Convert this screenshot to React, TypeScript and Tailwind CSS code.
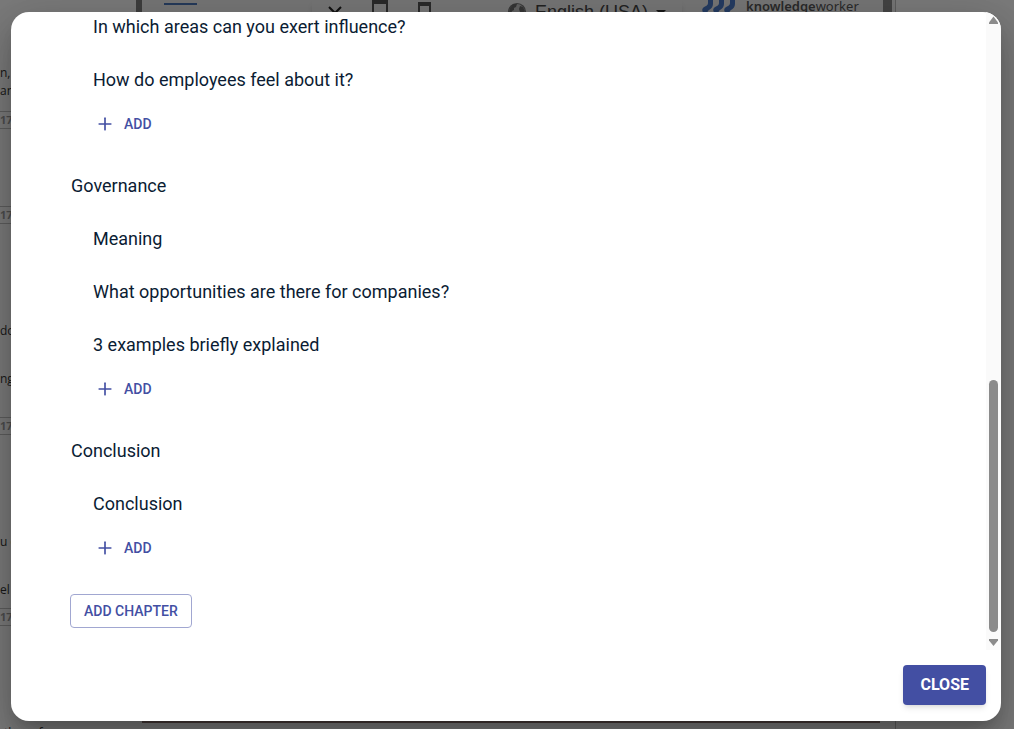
import React from 'react';
import { Plus } from 'lucide-react';

interface Chapter {
  title: string;
  topics: string[];
}

interface SideLine {
  text: string;
  spacing: string;
  badge?: boolean;
}

const chapters: Chapter[] = [
  { title: 'Governance', topics: ['Meaning', 'What opportunities are there for companies?', '3 examples briefly explained'] },
  { title: 'Conclusion', topics: ['Conclusion'] },
];

const sideLines: SideLine[] = [
  { text: 'n,', spacing: 'mt-[65px]' },
  { text: 'an', spacing: 'mt-[2px]' },
  { text: '17', spacing: 'mt-3', badge: true },
  { text: '17', spacing: 'mt-[77px]', badge: true },
  { text: 'do', spacing: 'mt-[99px]' },
  { text: 'ng', spacing: 'mt-8' },
  { text: '17', spacing: 'mt-[30px]', badge: true },
  { text: 'u e', spacing: 'mt-[99px]' },
  { text: 'el', spacing: 'mt-8' },
  { text: '17', spacing: 'mt-[10px]', badge: true },
  { text: 'those f', spacing: 'mt-[99px] pl-1' },
];

const Globe = () => (
  <svg width="20" height="20" viewBox="0 0 20 20" className="shrink-0">
    <circle cx="10" cy="10" r="8.5" fill="#c4c4c4" stroke="#777" strokeWidth="1.2" />
    <path d="M3 6l3-4 4 0-1 3-2 1 0 2-2 1-1 3-2-2zM13 4l3 1 2 4-2 3-3-2-1-3zM6 12l4 1 1 4-3 1-3-3z" fill="#6a6a6a" />
  </svg>
);

const Logo = () => (
  <svg width="34" height="24" viewBox="0 0 34 24" className="shrink-0" fill="#4a78c4">
    <path d="M6 0h5v4c0 3-2 5-4 6c-2 1-1 3-2 4c-4 0-6-4-4-6c2-2 5-2 5-5z" />
    <path d="M17 0h5v4c0 3-2 5-4 6c-2 1-1 3-2 4c-4 0-6-4-4-6c2-2 5-2 5-5z" />
    <path d="M28 0h5v4c0 3-2 5-4 6c-2 1-1 3-2 4c-4 0-6-4-4-6c2-2 5-2 5-5z" />
  </svg>
);

const Workspace = () => (
  <div className="absolute inset-0 flex overflow-hidden bg-[#f4f4f4]" aria-hidden="true">
    <aside className="flex-1 overflow-hidden font-['Open_Sans',sans-serif] text-xs leading-4 text-[#333]">
      {sideLines.map((line, index) => (
        <p
          key={index}
          className={`${line.spacing} ${line.badge ? 'h-[18px] border-y border-[#bbb] text-[11px] font-bold text-[#999]' : 'h-4'}`}
        >
          {line.text}
        </p>
      ))}
    </aside>
    <main className="flex w-3/4 flex-col justify-between border-r border-[#bbb]">
      <header className="flex h-6 border-l-[6px] border-[#7b7b7b] bg-[#ececec]">
        <div className="flex-1 pl-[22px] pt-[3px]">
          <div className="h-[2px] w-[33px] bg-[#4a74b4]" />
        </div>
        <div className="flex w-[370px] items-center bg-[#ececec] pl-4 shadow-md">
          <svg width="14" height="24" viewBox="0 0 14 24" fill="none" stroke="#222" strokeWidth="2">
            <path d="M1 7l6 6 6-6" />
          </svg>
          <svg width="16" height="24" viewBox="0 0 16 24" fill="none" stroke="#555" strokeWidth="2" className="ml-[30px]">
            <path d="M1 24V1h14v23M1 3h14" />
          </svg>
          <svg width="13" height="24" viewBox="0 0 13 24" fill="none" stroke="#555" strokeWidth="2" className="ml-[30px]">
            <path d="M1 24V3h11v21M1 5h11" />
          </svg>
          <span className="ml-auto flex items-center gap-2 pr-4 font-['Liberation_Sans',Arial,sans-serif] text-lg leading-6 text-[#444]">
            <Globe />
            English (USA)
            <svg width="10" height="5" viewBox="0 0 10 5" fill="#333"><path d="M0 0h10L5 5z" /></svg>
          </span>
        </div>
        <div className="flex w-[201px] items-start gap-[10px] pl-5">
          <Logo />
          <span className="font-['Noto_Sans',sans-serif] text-[13px] leading-3 text-[#555]">
            <b className="font-semibold">knowledge</b>worker
          </span>
        </div>
        <div className="mr-[3px] w-[9px] bg-[#888]" />
      </header>
      <div className="ml-[6px] mr-[15px] h-2 border-t-[2px] border-[#8a7370] bg-[#f4f4f4]" />
    </main>
    <aside className="w-[118px]" />
  </div>
);

const AddButton = () => (
  <button
    type="button"
    className="flex h-9 shrink-0 items-center gap-[9px] pl-[25px] text-sm font-medium text-[#434fa3]"
  >
    <Plus size={20} strokeWidth={2} />
    ADD
  </button>
);

const Topic = ({ title }: { title: string }) => (
  <li className="flex h-[53px] items-center pl-[23px]">{title}</li>
);

const ScrollBar = () => (
  <div className="flex w-[15px] shrink-0 flex-col items-center bg-[#fafafa] py-1" aria-hidden="true">
    <svg width="9" height="8" viewBox="0 0 9 8" fill="#8b8b8b"><path d="M4.5 0.5L9 6.5V8H0V6.5z" /></svg>
    <div className="flex-1" />
    <div className="h-2/5 w-[9px] rounded-full bg-[#8b8b8b]" />
    <svg width="9" height="7" viewBox="0 0 9 7" fill="#8b8b8b" className="mt-[7px]"><path d="M0 0H9V1.5L4.5 7L0 1.5z" /></svg>
  </div>
);

const App: React.FC = () => {
  return (
    <div className="relative h-screen overflow-hidden font-[Roboto,sans-serif]">
      <Workspace />
      <div className="relative flex h-full bg-black/50 pb-2 pl-[11px] pr-[13px] pt-3">
        <div
          role="dialog"
          aria-label="Chapters"
          className="flex w-full flex-col overflow-hidden rounded-[18px] bg-white shadow-[0_11px_15px_-7px_rgba(0,0,0,0.2),0_24px_38px_3px_rgba(0,0,0,0.14),0_9px_46px_8px_rgba(0,0,0,0.12)]"
        >
          <div className="flex min-h-0 flex-1">
            <div className="flex flex-1 flex-col items-start justify-end overflow-hidden pb-[22px] pl-[59px] text-lg text-[#0b1c33]">
              <ul className="shrink-0">
                <Topic title="In which areas can you exert influence?" />
                <Topic title="How do employees feel about it?" />
              </ul>
              <AddButton />
              {chapters.map((chapter) => (
                <section key={chapter.title} className="mt-[17px] shrink-0">
                  <h2 className="flex h-[53px] items-center pl-px">{chapter.title}</h2>
                  <ul>
                    {chapter.topics.map((topic) => (
                      <Topic key={topic} title={topic} />
                    ))}
                  </ul>
                  <AddButton />
                </section>
              ))}
              <button
                type="button"
                className="mt-7 h-[34px] shrink-0 rounded-[4px] border border-[#a1a7d1] px-[13px] text-sm font-medium text-[#434fa3]"
              >
                ADD CHAPTER
              </button>
            </div>
            <ScrollBar />
          </div>
          <div className="flex justify-end px-[15px] pb-4 pt-[15px]">
            <button
              type="button"
              className="h-10 rounded-[4px] bg-[#434fa3] px-[17px] text-base font-bold text-white shadow-md"
            >
              CLOSE
            </button>
          </div>
        </div>
      </div>
    </div>
  );
};

export default App;
